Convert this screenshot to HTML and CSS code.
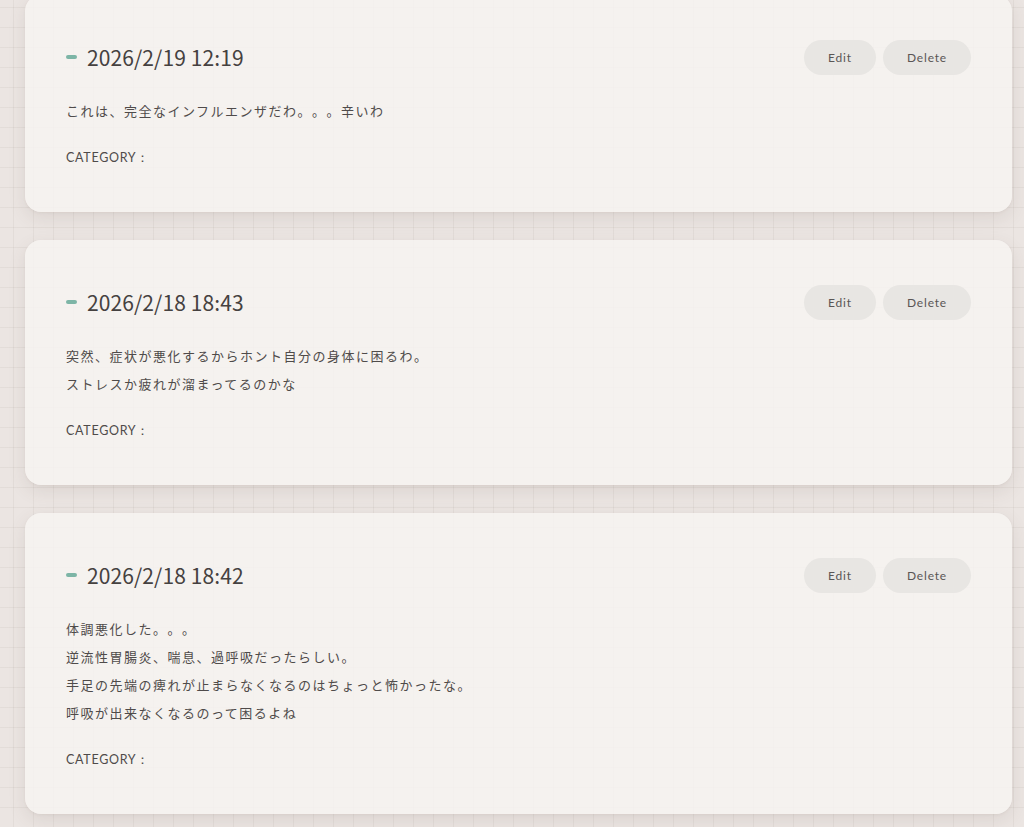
FILE: index.html
```html
<!DOCTYPE html>
<html lang="ja">
<head>
<meta charset="utf-8">
<title>Diary</title>
<link rel="stylesheet" href="styles.css">
</head>
<body>
<main class="list">
  <article class="card">
    <header class="card-head">
      <h2 class="date"><span class="mark"></span>2026/2/19 12:19</h2>
      <div class="actions"><button class="btn btn-edit">Edit</button><button class="btn btn-del">Delete</button></div>
    </header>
    <div class="body">
      <p>これは、完全なインフルエンザだわ。。。辛いわ</p>
    </div>
    <p class="cat">CATEGORY：</p>
  </article>
  <article class="card">
    <header class="card-head">
      <h2 class="date"><span class="mark"></span>2026/2/18 18:43</h2>
      <div class="actions"><button class="btn btn-edit">Edit</button><button class="btn btn-del">Delete</button></div>
    </header>
    <div class="body">
      <p>突然、症状が悪化するからホント自分の身体に困るわ。</p>
      <p>ストレスか疲れが溜まってるのかな</p>
    </div>
    <p class="cat">CATEGORY：</p>
  </article>
  <article class="card">
    <header class="card-head">
      <h2 class="date"><span class="mark"></span>2026/2/18 18:42</h2>
      <div class="actions"><button class="btn btn-edit">Edit</button><button class="btn btn-del">Delete</button></div>
    </header>
    <div class="body">
      <p>体調悪化した。。。</p>
      <p>逆流性胃腸炎、喘息、過呼吸だったらしい。</p>
      <p>手足の先端の痺れが止まらなくなるのはちょっと怖かったな。</p>
      <p>呼吸が出来なくなるのって困るよね</p>
    </div>
    <p class="cat">CATEGORY：</p>
  </article>
</main>
</body>
</html>
```
FILE: styles.css
```css
* { box-sizing: border-box; }
html, body { height: 100%; }
body {
  margin: 0;
  background-color: #ebe5e2;
  background-image:
    linear-gradient(to right, rgba(120, 100, 90, 0.07) 1px, transparent 1px),
    linear-gradient(to bottom, rgba(120, 100, 90, 0.07) 1px, transparent 1px);
  background-size: 20px 20px;
  background-position: 13px 7px;
  font-family: "Noto Sans CJK JP", "Noto Sans", sans-serif;
  color: #4a4645;
  overflow: hidden;
  text-spacing-trim: space-all;
}
.list {
  display: flex;
  flex-direction: column;
  gap: 28px;
  margin: -5px 12px 0 25px;
}
.card {
  background: rgba(248, 245, 242, 0.8);
  border-radius: 16px;
  padding: 45px 41px 45px 41px;
  box-shadow: 0 6px 18px rgba(90, 70, 60, 0.11), 0 1px 3px rgba(90, 70, 60, 0.05);
}
.card-head {
  display: flex;
  align-items: center;
  justify-content: space-between;
  height: 35px;
}
.date {
  margin: 0;
  display: flex;
  align-items: center;
  font-family: "Noto Sans CJK JP", "Noto Sans", sans-serif;
  font-weight: 400;
  font-size: 21px;
  line-height: 30px;
  letter-spacing: 0.1px;
  color: #454140;
  transform: translateY(-1px);
}
.mark {
  display: inline-block;
  width: 11px;
  height: 4px;
  border-radius: 2px;
  background: #7db5a6;
  margin-right: 10px;
}
.actions {
  display: flex;
  gap: 7px;
}
.btn {
  height: 35px;
  border: none;
  border-radius: 18px;
  background: #e8e6e3;
  color: #5a5655;
  font-family: Lato, "Noto Sans", sans-serif;
  font-size: 12px;
  letter-spacing: 0.8px;
  padding: 0;
}
.btn-edit { width: 72px; }
.btn-del { width: 88px; }
.body {
  margin-top: 22px;
}
.body p {
  margin: 0;
  font-size: 13px;
  line-height: 28px;
  letter-spacing: 1.5px;
  color: #4f4b4a;
  text-spacing-trim: space-all;
}
.cat {
  margin: 24px 0 0;
  font-family: Lato, "Noto Sans", sans-serif;
  font-size: 12.5px;
  line-height: 18px;
  letter-spacing: 0.7px;
  color: #4f4b4a;
}
```
